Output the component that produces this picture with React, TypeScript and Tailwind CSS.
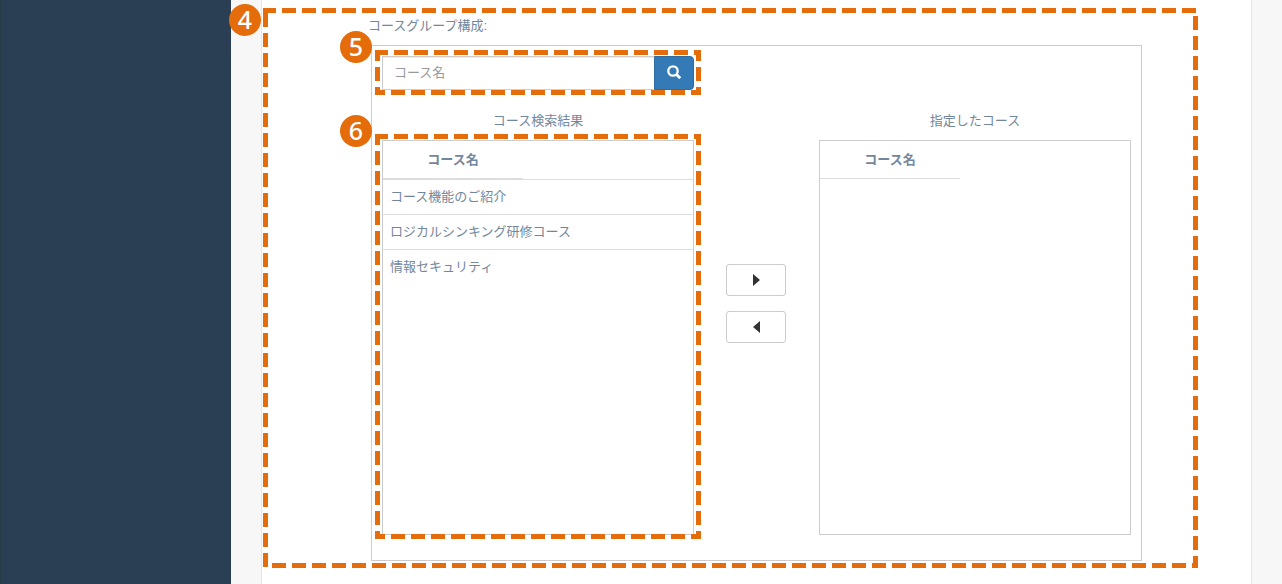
import { useState } from 'react'

const courses = ['コース機能のご紹介', 'ロジカルシンキング研修コース', '情報セキュリティ']

interface CalloutProps {
  number: number
  className: string
  badgeClassName: string
  // where the first dash begins on each side
  top: number
  right: number
  bottom: number
  left: number
}

function Callout({ number, className, badgeClassName, top, right, bottom, left }: CalloutProps) {
  return (
    <div className={`absolute pointer-events-none ${className}`}>
      <svg className="w-full h-full" stroke="#e46c0a" strokeWidth="10" strokeDasharray="14 6">
        <line x1={top} y1="0" x2="100%" y2="0" />
        <line x1="100%" y1={right} x2="100%" y2="100%" />
        <line x1={bottom} y1="100%" x2="100%" y2="100%" />
        <line x1="0" y1={left} x2="0" y2="100%" />
      </svg>
      <span
        className={`absolute flex items-center justify-center w-8 h-8 rounded-full bg-[#e46c0a] text-white text-[25px] leading-8 pb-0.5 font-['Noto_Sans',sans-serif] font-medium ${badgeClassName}`}
      >
        {number}
      </span>
    </div>
  )
}

function CourseTable({ rows, label }: { rows: string[]; label: string }) {
  return (
    <div className="relative h-[395px] border border-[#ccc]">
      <table className="block w-full" aria-label={label}>
        <thead className="block">
          <tr className="block">
            <th className="block w-[140px] h-[38px] leading-[37px] border-b border-[#ddd] font-bold text-center">
              コース名
            </th>
          </tr>
        </thead>
        <tbody className="block">
          {rows.map((name) => (
            <tr key={name} className="block border-t border-[#ddd]">
              <td className="block px-[7px] py-2 leading-[18px]">{name}</td>
            </tr>
          ))}
        </tbody>
      </table>
    </div>
  )
}

export default function App() {
  const [keyword, setKeyword] = useState('')

  return (
    <div className="flex min-h-screen bg-[#f7f7f7] text-[13px] leading-5 text-[#73879c] font-['Liberation_Sans','Noto_Sans_CJK_JP',sans-serif]">
      <aside className="w-[231px] shrink-0 bg-[#2a3f54] border-l border-[#263c48]" />

      <main className="flex-1 ml-[30px] mr-[30px] pt-2 bg-white border-x border-[#e6e6e6]">
        <section className="relative ml-px mr-[53px] pl-[105px] pr-14 pt-2 pb-[7px]">
          <h2 className="h-[29px] leading-5">コースグループ構成:</h2>

          <div className="ml-[3px] px-2.5 pt-2.5 pb-[25px] border border-[#ccc] grid grid-cols-[1fr_125px_1fr]">
            <form className="relative flex h-[34px] mb-5" onSubmit={(e) => e.preventDefault()}>
              <input
                type="text"
                aria-label="コース名"
                placeholder="コース名"
                value={keyword}
                onChange={(e) => setKeyword(e.target.value)}
                className="flex-1 min-w-0 px-[11px] bg-white border border-r-0 border-[#ccc] shadow-[inset_0_1px_1px_rgba(0,0,0,0.075)] placeholder:text-[#999] outline-none"
              />
              <button
                type="submit"
                aria-label="検索"
                className="flex items-center justify-center w-10 pb-0.5 bg-[#337ab7] border border-[#2e6da4] rounded-r text-white"
              >
                <svg width="14" height="14" viewBox="0 0 14 14" fill="none" stroke="currentColor">
                  <circle cx="6" cy="6" r="4.7" strokeWidth="2.3" />
                  <path d="M9.3 9.3l3.9 3.9" strokeWidth="2.8" />
                </svg>
              </button>
              <Callout
                number={5}
                className="-left-[7px] -right-[7px] -top-1.5 -bottom-[5px]"
                badgeClassName="-left-[35px] -top-[19px]"
                top={-1}
                right={-3}
                bottom={-4}
                left={-3}
              />
            </form>

            <div className="col-start-1">
              <h3 className="h-[30px] leading-[22px] text-center">コース検索結果</h3>
              <div className="relative">
                <CourseTable rows={courses} label="コース検索結果" />
                <Callout
                  number={6}
                  className="-left-[7px] -right-[7px] -top-1.5 -bottom-1"
                  badgeClassName="-left-[35px] -top-[19px]"
                  top={-1}
                  right={-3}
                  bottom={-4}
                  left={-3}
                />
              </div>
            </div>

            <div className="flex flex-col items-center gap-[15px] pt-[154px] pr-px text-[#333]">
              <button
                type="button"
                aria-label="追加"
                className="flex items-center justify-center w-[60px] h-8 bg-white border border-[#ccc] rounded-[3px]"
              >
                <svg width="8" height="12" viewBox="0 0 8 12" fill="currentColor">
                  <path d="M1 0l7 6-7 6z" />
                </svg>
              </button>
              <button
                type="button"
                aria-label="削除"
                className="flex items-center justify-center w-[60px] h-8 bg-white border border-[#ccc] rounded-[3px]"
              >
                <svg width="8" height="12" viewBox="0 0 8 12" fill="currentColor">
                  <path d="M8 0L1 6l7 6z" />
                </svg>
              </button>
            </div>

            <div>
              <h3 className="h-[30px] leading-[22px] text-center">指定したコース</h3>
              <CourseTable rows={[]} label="指定したコース" />
            </div>
          </div>

          <Callout
            number={4}
            className="inset-0"
            badgeClassName="-left-[34px] -top-1"
            top={-1}
            right={8}
            bottom={9}
            left={5}
          />
        </section>
      </main>
    </div>
  )
}
